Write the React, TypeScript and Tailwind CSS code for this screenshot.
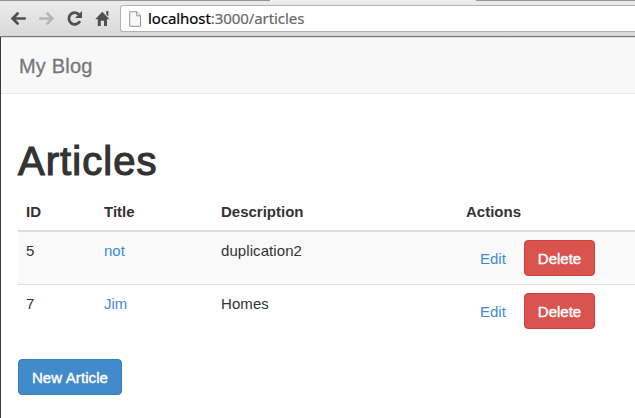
import React from 'react';

const articles = [
  { id: 5, title: 'not', description: 'duplication2' },
  { id: 7, title: 'Jim', description: 'Homes' },
];

function Toolbar() {
  return (
    <header className="flex h-[37px] shrink-0 flex-col border-b border-[#777777] bg-gradient-to-b from-[#ececec] to-[#d9d9d9]">
      <div className="flex h-px shrink-0">
        <div className="w-[270px] bg-[#949194]" />
        <div className="w-[206px] bg-[#eeeeee]" />
        <div className="flex-1 bg-[#949194]" />
      </div>
      <div className="flex min-h-0 flex-1 pt-1">
        <svg className="h-[28px] w-[120px] shrink-0" viewBox="0 0 120 28" fill="none">
          <path d="M24.7 13.5H13M17.6 8.5L12.6 13.5L17.6 18.5" stroke="#505050" strokeWidth="2.7" strokeLinecap="round" />
          <path d="M40.3 13.5H52M47.4 8.5L52.4 13.5L47.4 18.5" stroke="#b4b4b4" strokeWidth="2.5" strokeLinecap="round" />
          <path d="M79.2 9.6A5.9 5.9 0 1 0 80 16.2" stroke="#505050" strokeWidth="2.8" />
          <path d="M82 6V13H75Z" fill="#505050" />
          <path d="M102.3 6.7L109.4 14.2H107V21H104V15.8H100.8V21H97.8V14.2H95.2Z" fill="#505050" />
          <path d="M106.3 6H108.3V11.6L106.3 9.5Z" fill="#505050" />
        </svg>
        <div className="flex h-[27px] flex-1 items-center rounded-l-[3px] border border-r-0 border-[#b2b2b2] bg-white pl-2">
          <svg className="mr-[6px] h-[16px] w-[13px]" viewBox="0 0 13 16" fill="none">
            <path d="M.7.7H8L11.5 4.5V15.3H.7Z" fill="#f7f7f7" stroke="#929292" />
            <path d="M7.7.7V4.8H11.5" fill="#fff" stroke="#929292" />
          </svg>
          <div className="relative -top-px whitespace-nowrap font-['Noto_Sans',sans-serif] text-[15px] leading-5 tracking-[-0.07px] text-[#696969] [-webkit-text-stroke:0.2px_currentColor]">
            <span className="text-black">localhost</span>:3000/articles
          </div>
        </div>
      </div>
    </header>
  );
}

export default function App() {
  return (
    <div className="flex h-[418px] w-[635px] flex-col overflow-hidden bg-white font-['Liberation_Sans',Arial,sans-serif] text-[15px] leading-5 text-[#333333]">
      <Toolbar />
      <div className="flex min-h-0 flex-1 flex-col border-l border-[#3b3b3b]">
        <nav className="flex h-[57px] shrink-0 items-center border-b border-t border-b-[#e7e7e7] border-t-[#e0e0e0] bg-[#f8f8f8] pl-[18px]">
          <a className="text-[20px] leading-6 tracking-[0.2px] text-[#777777] [-webkit-text-stroke:0.3px_#777777]">My Blog</a>
        </nav>
        <main className="pl-[17px]">
          <h1 className="mt-[43px] h-[55px] whitespace-nowrap text-[40px] leading-[48px] tracking-[1.05px] [-webkit-text-stroke:1.2px_#333333]">Articles</h1>
          <table className="w-[617px] table-fixed border-collapse text-left">
            <colgroup>
              <col className="w-[78px]" />
              <col className="w-[117px]" />
              <col className="w-[245px]" />
              <col />
            </colgroup>
            <thead>
              <tr className="h-[39px] border-b-2 border-[#dddddd]">
                <th className="px-2 pt-[2px]">ID</th>
                <th className="px-2 pt-[2px]">Title</th>
                <th className="px-2 pt-[2px]">Description</th>
                <th className="px-2 pt-[2px]">Actions</th>
              </tr>
            </thead>
            <tbody>
              {articles.map((article) => (
                <tr key={article.id} className="h-[53px] border-t border-[#dddddd] odd:bg-[#f9f9f9]">
                  <td className="px-2 pt-[9px] align-top">{article.id}</td>
                  <td className="px-2 pt-[9px] align-top text-[#428bca]">{article.title}</td>
                  <td className="px-2 pt-[9px] align-top tracking-[0.08px]">{article.description}</td>
                  <td className="px-2 pt-2 align-top">
                    <div className="flex">
                      <a className="w-[58px] pl-[14px] pt-[9px] text-[#428bca]">Edit</a>
                      <button className="h-9 w-[71px] rounded border border-[#d43f3a] bg-[#d9534f] pt-[2px] text-[15px] leading-5 text-white [-webkit-text-stroke:0.4px_#ffffff]">Delete</button>
                    </div>
                  </td>
                </tr>
              ))}
            </tbody>
          </table>
          <button className="mt-[22px] h-9 w-[104px] whitespace-nowrap rounded border border-[#357ebd] bg-[#428bca] pt-[2px] text-[15px] leading-5 tracking-[0.1px] text-white [-webkit-text-stroke:0.4px_#ffffff]">New Article</button>
        </main>
      </div>
    </div>
  );
}
